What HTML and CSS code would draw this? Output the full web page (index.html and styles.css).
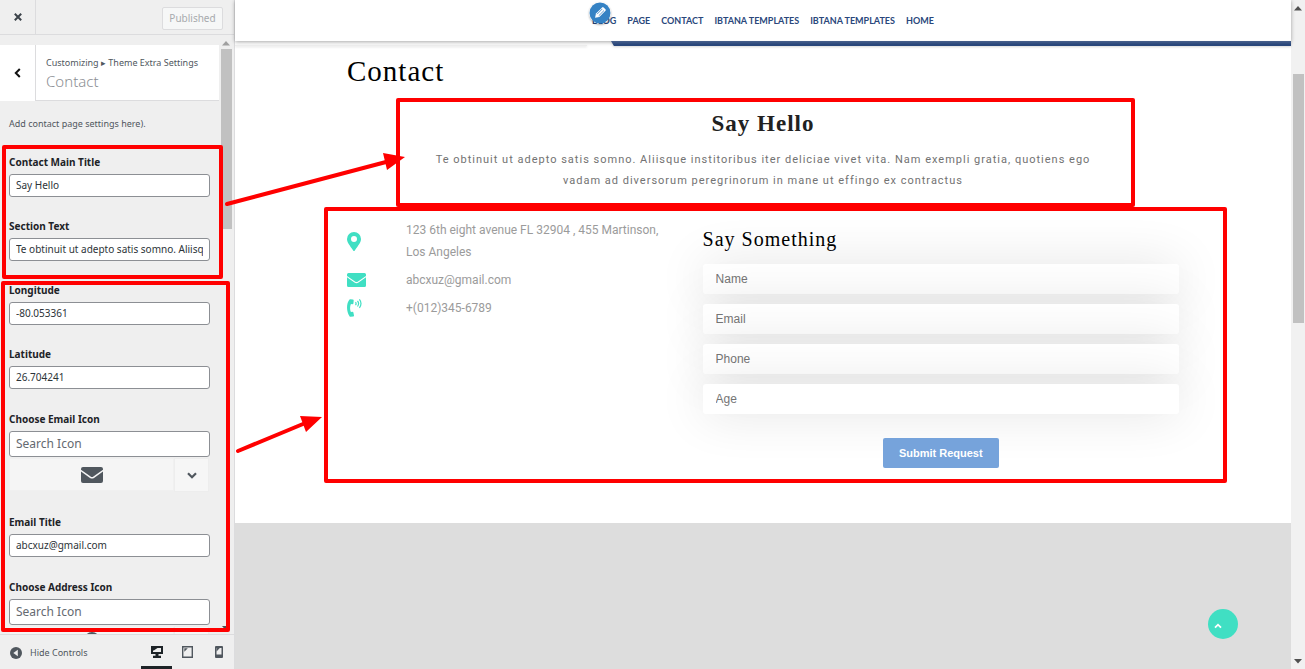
FILE: index.html
```html
<!DOCTYPE html>
<html lang="en">
<head>
<meta charset="utf-8">
<title>Customize: Contact</title>
<link rel="stylesheet" href="styles.css">
</head>
<body>
<aside class="sidebar">
  <header class="side-top">
    <button class="close" type="button" aria-label="Close"><svg width="8" height="8" viewBox="0 0 8 8"><path d="M.8.8l6.4 6.4M7.2.8L.8 7.2" stroke="#3c434a" stroke-width="2"/></svg></button>
    <button class="published" type="button" disabled>Published</button>
  </header>
  <div class="side-body">
    <div class="panel">
      <div class="panel-title">
        <button class="back" type="button" aria-label="Back"><svg width="7" height="10" viewBox="0 0 7 10"><path d="M5.8 1L1.8 5l4 4" fill="none" stroke="#111" stroke-width="2"/></svg></button>
        <div class="crumbs">
          <div class="crumb">Customizing ▸ Theme Extra Settings</div>
          <h2 class="section-name">Contact</h2>
        </div>
      </div>
      <p class="description">Add contact page settings here).</p>
      <form class="fields">
        <div class="field"><label for="title">Contact Main Title</label><input id="title" type="text" value="Say Hello"></div>
        <div class="field"><label for="text">Section Text</label><input id="text" type="text" value="Te obtinuit ut adepto satis somno. Aliisque institoribus iter deliciae vivet vita."></div>
        <div class="field"><label for="lon">Longitude</label><input id="lon" type="text" value="-80.053361"></div>
        <div class="field"><label for="lat">Latitude</label><input id="lat" type="text" value="26.704241"></div>
        <div class="field icon-field">
          <label for="eicon">Choose Email Icon</label><input id="eicon" type="text" placeholder="Search Icon">
          <div class="picker">
            <div class="picked"><svg width="22" height="16" viewBox="0 0 22 16"><path d="M2 0h18q2 0 2 2v.8L12.400 9.500q-1.400 1-2.800 0L0 2.800V2q0-2 2-2zM0 4.600l9 6.300q2 1.300 4 0l9-6.300V14q0 2-2 2H2q-2 0-2-2z" fill="#50575e"/></svg></div>
            <button class="picker-open" type="button" aria-label="Show icons"><svg width="10" height="7" viewBox="0 0 10 7"><path d="M1 1.200l4 4 4-4" fill="none" stroke="#50575e" stroke-width="2.200"/></svg></button>
          </div>
        </div>
        <div class="field"><label for="email-title">Email Title</label><input id="email-title" type="text" value="abcxuz@gmail.com"></div>
        <div class="field icon-field">
          <label for="aicon">Choose Address Icon</label><input id="aicon" type="text" placeholder="Search Icon">
          <div class="picker">
            <div class="picked"><svg width="16" height="22" viewBox="0 0 14 20"><path d="M7 0a7 7 0 0 1 7 7c0 4-4 8-7 13C4 15 0 11 0 7a7 7 0 0 1 7-7z" fill="#50575e"/></svg></div>
            <div class="picker-open"></div>
          </div>
        </div>
      </form>
    </div>
    <div class="side-scroll">
      <svg width="8" height="5" viewBox="0 0 8 5"><path d="M4 0l4 4.500H0z" fill="#a0a0a0"/></svg>
      <div class="side-thumb"></div>
      <svg class="down" width="8" height="5" viewBox="0 0 8 5"><path d="M0 0h8L4 4.500z" fill="#505050"/></svg>
    </div>
  </div>
  <footer class="side-foot">
    <button class="hide" type="button"><svg width="12" height="12" viewBox="0 0 12 12"><circle cx="6" cy="6" r="6" fill="#50575e"/><path d="M7.800 2.800v6.400L3.300 6z" fill="#efefef"/></svg>Hide Controls</button>
    <div class="devices">
      <button class="device active" type="button" aria-label="Desktop"><svg width="12" height="12" viewBox="0 0 12 12"><path d="M0 0h12v8H7.500v1.700H10V12H2V9.700h2.500V8H0z" fill="#1d2327"/><path d="M2 2h8v4H2z" fill="#efefef"/><path d="M2 2h4.500L2.800 4.500H2z" fill="#1d2327"/></svg></button>
      <button class="device" type="button" aria-label="Tablet"><svg width="11" height="12" viewBox="0 0 11 12"><path d="M.7.7h9.600v10.600H.7z" fill="none" stroke="#50575e" stroke-width="1.400"/><path d="M2.300 2.300h3.500L2.300 5.800z" fill="#50575e"/></svg></button>
      <button class="device" type="button" aria-label="Mobile"><svg width="8" height="12" viewBox="0 0 8 12"><rect width="8" height="12" rx="1" fill="#50575e"/><path d="M1.500 2h5v6.500h-5z" fill="#efefef"/><path d="M1.500 2h3.300L1.500 5.500z" fill="#50575e"/></svg></button>
    </div>
  </footer>
</aside>

<main class="preview">
  <header class="site-head">
    <nav class="menu">
      <a href="#">BLOG</a><a href="#">PAGE</a><a href="#">CONTACT</a><a href="#">IBTANA TEMPLATES</a><a href="#">IBTANA TEMPLATES</a><a href="#">HOME</a>
      <button class="edit" type="button" aria-label="Edit menu"><svg width="22" height="22" viewBox="0 0 22 22"><circle cx="11" cy="11" r="10.500" fill="#3582c4"/><path d="M6 15.800l1-4.200 6.200-6.200q.7-.6 1.400 0l1.900 1.900q.6.700 0 1.400l-6.200 6.200z" fill="#fff"/><path d="M8 12.200l5.300-5.300M9.700 13.800L15 8.500" stroke="#3582c4" stroke-width=".8"/></svg></button>
    </nav>
  </header>
  <div class="strip"><div class="strip-light"></div><div class="strip-navy"></div></div>
  <div class="content">
    <h1 class="page-title">Contact</h1>
    <section class="intro">
      <h2>Say Hello</h2>
      <p>Te obtinuit ut adepto satis somno. Aliisque institoribus iter deliciae vivet vita. Nam exempli gratia, quotiens ego vadam ad diversorum peregrinorum in mane ut effingo ex contractus</p>
    </section>
    <div class="columns">
      <ul class="info">
        <li><span class="info-icon"><svg width="14" height="19" viewBox="0 0 14 19"><path fill-rule="evenodd" d="M7 0a7 7 0 0 1 7 7c0 3.500-2.500 6-6.200 11.500q-.8 1-1.600 0C2.500 13 0 10.500 0 7a7 7 0 0 1 7-7zm0 4a3 3 0 1 0 0 6 3 3 0 0 0 0-6z" fill="#40dfc3"/></svg></span><span>123 6th eight avenue FL 32904 , 455 Martinson, Los Angeles</span></li>
        <li><span class="info-icon"><svg width="19" height="14" viewBox="0 0 19 14"><path d="M1.500 0h16Q19 0 19 1.500V3l-8 5.500q-1.500 1-3 0L0 3V1.500Q0 0 1.500 0zM0 4.300l7.500 5.300q2 1.200 4 0L19 4.300v8.200q0 1.500-1.500 1.500h-16Q0 14 0 12.500z" fill="#40dfc3"/></svg></span><span>abcxuz@gmail.com</span></li>
        <li><span class="info-icon"><svg width="15" height="18" viewBox="0 0 15 18"><path d="M5.800.6L3.400.2Q2.900.2 2.500.6C-.8 4.500-.8 12.500 2.500 17.300q.4.500 1 .5l2.800-.4q.8-.2.700-.9l-.6-3q-.2-.7-.9-.7l-1.600.3C2.800 11 2.800 7.500 3.900 5l1.600.3q.7 0 .9-.7l.3-3q0-.8-.9-1z" fill="#40dfc3"/><path d="M8.500 3.200q1.200 1.500 0 3M10.500 1.800q2.200 2.800 0 5.700M12.400.4q3.200 4 0 8.400" fill="none" stroke="#40dfc3" stroke-width="1.200"/></svg></span><span>+(012)345-6789</span></li>
      </ul>
      <form class="request">
        <h3>Say Something</h3>
        <input type="text" placeholder="Name" aria-label="Name">
        <input type="email" placeholder="Email" aria-label="Email">
        <input type="tel" placeholder="Phone" aria-label="Phone">
        <input type="text" placeholder="Age" aria-label="Age">
        <button type="button">Submit Request</button>
      </form>
    </div>
  </div>
  <div class="map"></div>
  <a class="to-top" href="#" aria-label="Back to top"><svg width="8" height="6" viewBox="0 0 8 6"><path d="M1 4.700l3-3 3 3" fill="none" stroke="#fff" stroke-width="1.800"/></svg></a>
</main>
<div class="page-scroll">
  <svg width="8" height="5" viewBox="0 0 8 5"><path d="M4 0l4 4.500H0z" fill="#505050"/></svg>
  <div class="page-thumb"></div>
  <svg class="down" width="8" height="5" viewBox="0 0 8 5"><path d="M0 0h8L4 4.500z" fill="#505050"/></svg>
</div>

<svg class="marks" width="1305" height="669" viewBox="0 0 1305 669" aria-hidden="true">
  <g fill="none" stroke="#f00" stroke-width="4" stroke-linejoin="round">
    <path d="M4 147h217v130H4zM3 283h225v347H3zM398 100h735v105H398zM326 209h899v272H326z"/>
    <path d="M227 204L386 162M238 451L303 424" stroke-linecap="round"/>
  </g>
  <path d="M383 153l22 4-18 13zM300 416l22 1-16 15z" fill="#f00"/>
</svg>
</body>
</html>
```
FILE: styles.css
```css
* { box-sizing: border-box; }
body { margin: 0; display: flex; height: 100vh; overflow: hidden; position: relative; background: #fff; font-family: "Liberation Sans", Arial, sans-serif; }
button { font: inherit; padding: 0; border: 0; background: none; }
svg { display: block; }
h1, h2, h3, p, ul { margin: 0; padding: 0; }

.sidebar { width: 235px; flex: none; display: flex; flex-direction: column; background: #efefef; border-right: 1px solid #dcdcde; font-family: "Noto Sans", "Open Sans", sans-serif; font-size: 10px; line-height: 16px; color: #50575e; }
.side-top { display: flex; justify-content: space-between; align-items: center; height: 35px; flex: none; border-bottom: 1px solid #dcdcde; padding-right: 11px; }
.close { width: 36px; align-self: stretch; border-right: 1px solid #dcdcde; display: grid; place-items: center; }
.published { height: 23px; width: 61px; margin-top: 2px; border: 1px solid #dcdcde; border-radius: 2px; background: #f6f7f7; color: #a7aaad; }
.side-body { flex: 1; min-height: 0; display: flex; }
.panel { width: 219px; flex: none; overflow: hidden; padding-top: 10px; }
.panel-title { display: flex; height: 56px; background: #fff; }
.back { width: 36px; border-right: 1px solid #dcdcde; display: grid; place-items: center; }
.crumbs { flex: 1; border-bottom: 1px solid #dcdcde; padding: 10px 0 0 10px; white-space: nowrap; }
.crumb { font-size: 9px; }
.section-name { font-size: 15px; line-height: 20px; font-weight: 300; color: #8c8f94; }
.description { padding: 15px 9px 0; font-size: 9px; }
.fields { padding: 22px 9px 0; display: flex; flex-direction: column; gap: 21px; }
.field { display: flex; flex-direction: column; gap: 4px; }
.field label { font-weight: 700; color: #1d2327; }
.field input { width: 100%; height: 23px; border: 1px solid #8c8f94; border-radius: 3px; padding: 0 6px 1px; background: #fff; font: inherit; color: #2c3338; }
.icon-field { gap: 0; }
.icon-field label { padding-top: 1px; }
.icon-field input { height: 26px; margin-top: 4px; font-size: 12px; padding-bottom: 2px; }
.icon-field input::placeholder { color: #646970; }
.picker { display: flex; height: 36px; padding: 1px 1px 0 0; }
.picked { flex: 1; height: 33px; background: #f5f5f5; display: grid; place-items: center; border: 1px solid #f0f0f0; }
.picker-open { width: 35px; height: 34px; background: #f6f6f6; border: 1px solid #ededed; display: grid; place-items: center; }
.side-scroll { width: 15px; flex: none; padding: 6px 3px 3px 2px; display: flex; flex-direction: column; align-items: center; }
.side-thumb { width: 11px; height: 180px; margin-top: 3px; background: #c1c1c1; flex: none; }
.down { margin-top: auto; }
.side-foot { height: 35px; flex: none; border-top: 1px solid #dcdcde; display: flex; justify-content: space-between; padding: 0 0 0 10px; }
.hide { display: flex; align-items: center; gap: 8px; padding-top: 1px; font-size: 9px; color: #50575e; }
.devices { display: flex; }
.device { width: 31px; display: grid; place-items: center; border-bottom: 3px solid transparent; padding-top: 3px; }
.active { border-bottom-color: #1d2327; }

.preview { flex: 1; min-width: 0; display: flex; flex-direction: column; position: relative; background: #fff; }
.site-head { height: 41px; flex: none; display: flex; justify-content: center; align-items: center; background: #fff; box-shadow: 0 1px 4px rgba(0, 0, 0, .35); z-index: 1; }
.menu { display: flex; gap: 11px; position: relative; font: 700 9px/14px Lato, sans-serif; white-space: nowrap; }
.menu a { color: #2a477b; text-decoration: none; }
.edit { position: absolute; left: -3px; top: -12px; border-radius: 50%; box-shadow: 0 1px 2px rgba(0, 0, 0, .3); }
.strip { display: flex; justify-content: space-between; height: 5px; flex: none; z-index: 2; filter: drop-shadow(0 1px 1px rgba(0, 0, 0, .15)); }
.strip-light { width: 33.3%; border-bottom: 1px solid #ececec; }
.strip-navy { width: 64.4%; background: linear-gradient(#48608b, #2a477b 70%); clip-path: polygon(0 0, 100% 0, 100% 100%, 3px 100%); }
.content { width: 100%; max-width: 832px; margin: 0 auto; padding: 7px 0 55px; }
.page-title { font: 400 29px/36px "Liberation Serif", serif; letter-spacing: 1px; color: #000; }
.intro { text-align: center; padding: 21px 84px 0; }
.intro h2 { font: 700 23px/28px "Liberation Serif", serif; letter-spacing: 1px; color: #212121; }
.intro p { margin-top: 11px; font: 400 11px/21px Roboto, sans-serif; letter-spacing: 1px; color: #727272; }
.columns { display: grid; grid-template-columns: 2fr 3fr; gap: 38px; padding-top: 28px; }
.info { list-style: none; display: flex; flex-direction: column; gap: 6px; font: 400 12px/22px Roboto, sans-serif; color: #9b9b9b; }
.info li { display: flex; align-items: center; }
.info-icon { width: 59px; flex: none; }
.request { display: flex; flex-direction: column; gap: 10px; padding-top: 8px; }
.request h3 { font: 400 20px/24px "Liberation Serif", serif; letter-spacing: 1px; color: #000; margin-bottom: 3px; }
.request input { height: 30px; border: 0; border-radius: 3px; padding: 0 13px; background: #fff; box-shadow: 0 0 50px rgba(0, 0, 0, .12); font: 12px "Liberation Sans", Arial, sans-serif; position: relative; }
.request input::placeholder { color: #757575; }
.request button { align-self: center; position: relative; height: 30px; padding: 0 16px; margin-top: 14px; border-radius: 2px; background: #76a3db; color: #fff; font-size: 11px; font-weight: 700; }
.map { flex: 1; background: #ddd; }
.to-top { position: absolute; right: 53px; bottom: 30px; width: 30px; height: 30px; border-radius: 50%; background: #40dfc3; display: flex; align-items: center; padding: 4px 0 0 6px; }
.page-scroll { width: 14px; flex: none; background: #f1f1f1; display: flex; flex-direction: column; align-items: center; padding: 6px 0 5px; }
.page-thumb { width: 11px; height: 249px; flex: none; margin-top: 63px; background: #c1c1c1; }
.marks { position: absolute; left: 0; top: 0; pointer-events: none; z-index: 5; }
```
